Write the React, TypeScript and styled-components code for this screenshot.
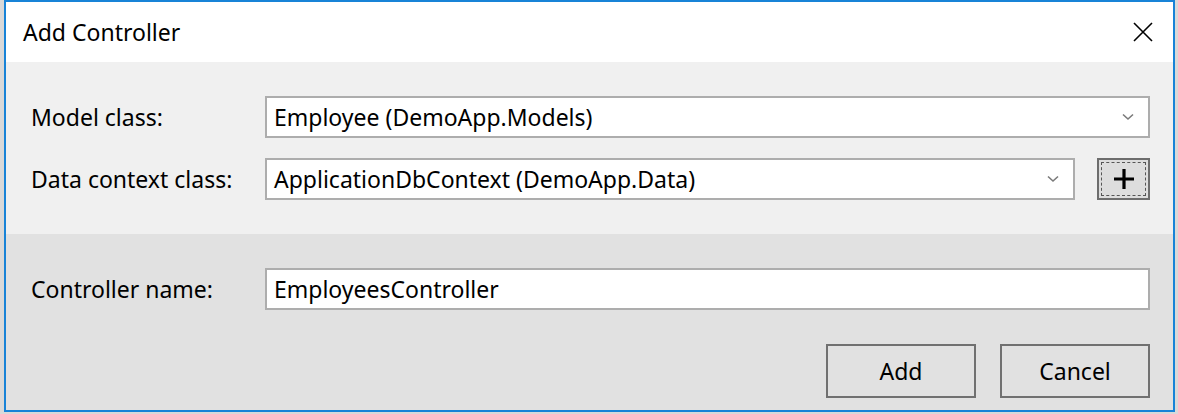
import React from "react";
import styled, { createGlobalStyle } from "styled-components";

const Global = createGlobalStyle`
  html, body { margin: 0; padding: 0; }
  body {
    background: #d9d9d9;
    font-family: "Segoe UI", "Noto Sans", "Open Sans", sans-serif;
    width: 1178px;
    height: 414px;
    overflow: hidden;
  }
`;

const Dialog = styled.div`
  box-sizing: border-box;
  margin-left: 4px;
  width: 1171px;
  height: 412px;
  border: 2px solid #1883d7;
  display: flex;
  flex-direction: column;
  color: #000;
  font-size: 23px;
`;

const TitleBar = styled.div`
  height: 60px;
  background: #fff;
  display: flex;
  align-items: center;
  justify-content: space-between;
  padding: 0 18px 0 17px;
`;

const Title = styled.div`
  font-size: 23px;
  margin-top: -1px;
`;

const Close = styled.div`
  width: 24px;
  height: 24px;
  display: flex;
  align-items: center;
  justify-content: center;
`;

const Panel = styled.div<{ $bg: string; $grow?: boolean }>`
  background: ${(p) => p.$bg};
  padding: 34px 23px 0 25px;
  display: flex;
  flex-direction: column;
  gap: 20px;
  flex: ${(p) => (p.$grow ? 1 : "none")};
  height: ${(p) => (p.$grow ? "auto" : "172px")};
  box-sizing: border-box;
`;

const Row = styled.div`
  display: flex;
  align-items: center;
  height: 42px;
`;

const Label = styled.div`
  width: 234px;
  flex: none;
`;

const Field = styled.div`
  box-sizing: border-box;
  height: 42px;
  flex: 1;
  background: #fff;
  border: 2px solid #adadad;
  display: flex;
  align-items: center;
  padding: 0 14px 0 7px;
`;

const FieldText = styled.span`
  flex: 1;
  white-space: nowrap;
`;

const PlusButton = styled.div`
  box-sizing: border-box;
  width: 53px;
  height: 42px;
  margin-left: 22px;
  border: 2px solid #6d6d6d;
  background: #dddddd;
  padding: 2px;
  display: flex;
`;

const FocusRect = styled.div`
  flex: 1;
  border: 1px dashed #555;
  display: flex;
  align-items: center;
  justify-content: center;
`;

const Buttons = styled.div`
  display: flex;
  justify-content: flex-end;
  gap: 24px;
  margin-top: 14px;
`;

const Button = styled.div`
  box-sizing: border-box;
  width: 150px;
  height: 54px;
  border: 2px solid #707070;
  background: #e1e1e1;
  display: flex;
  align-items: center;
  justify-content: center;
`;

const Chevron = () => (
  <svg width="12" height="8" viewBox="0 0 12 8">
    <path d="M1 1.5 L6 6 L11 1.5" fill="none" stroke="#7a7a7a" strokeWidth="1.6" />
  </svg>
);

export default function App() {
  return (
    <>
      <Global />
      <Dialog>
        <TitleBar>
          <Title>Add Controller</Title>
          <Close>
            <svg width="20" height="20" viewBox="0 0 20 20">
              <path d="M1 1 L19 19 M19 1 L1 19" stroke="#000" strokeWidth="1.6" />
            </svg>
          </Close>
        </TitleBar>
        <Panel $bg="#f0f0f0">
          <Row>
            <Label>Model class:</Label>
            <Field>
              <FieldText>Employee (DemoApp.Models)</FieldText>
              <Chevron />
            </Field>
          </Row>
          <Row>
            <Label>Data context class:</Label>
            <Field>
              <FieldText>ApplicationDbContext (DemoApp.Data)</FieldText>
              <Chevron />
            </Field>
            <PlusButton>
              <FocusRect>
                <svg width="20" height="20" viewBox="0 0 20 20">
                  <path d="M10 0 V20 M0 10 H20" stroke="#000" strokeWidth="3.2" />
                </svg>
              </FocusRect>
            </PlusButton>
          </Row>
        </Panel>
        <Panel $bg="#e1e1e1" $grow>
          <Row>
            <Label>Controller name:</Label>
            <Field>
              <FieldText>EmployeesController</FieldText>
            </Field>
          </Row>
          <Buttons>
            <Button>Add</Button>
            <Button>Cancel</Button>
          </Buttons>
        </Panel>
      </Dialog>
    </>
  );
}
